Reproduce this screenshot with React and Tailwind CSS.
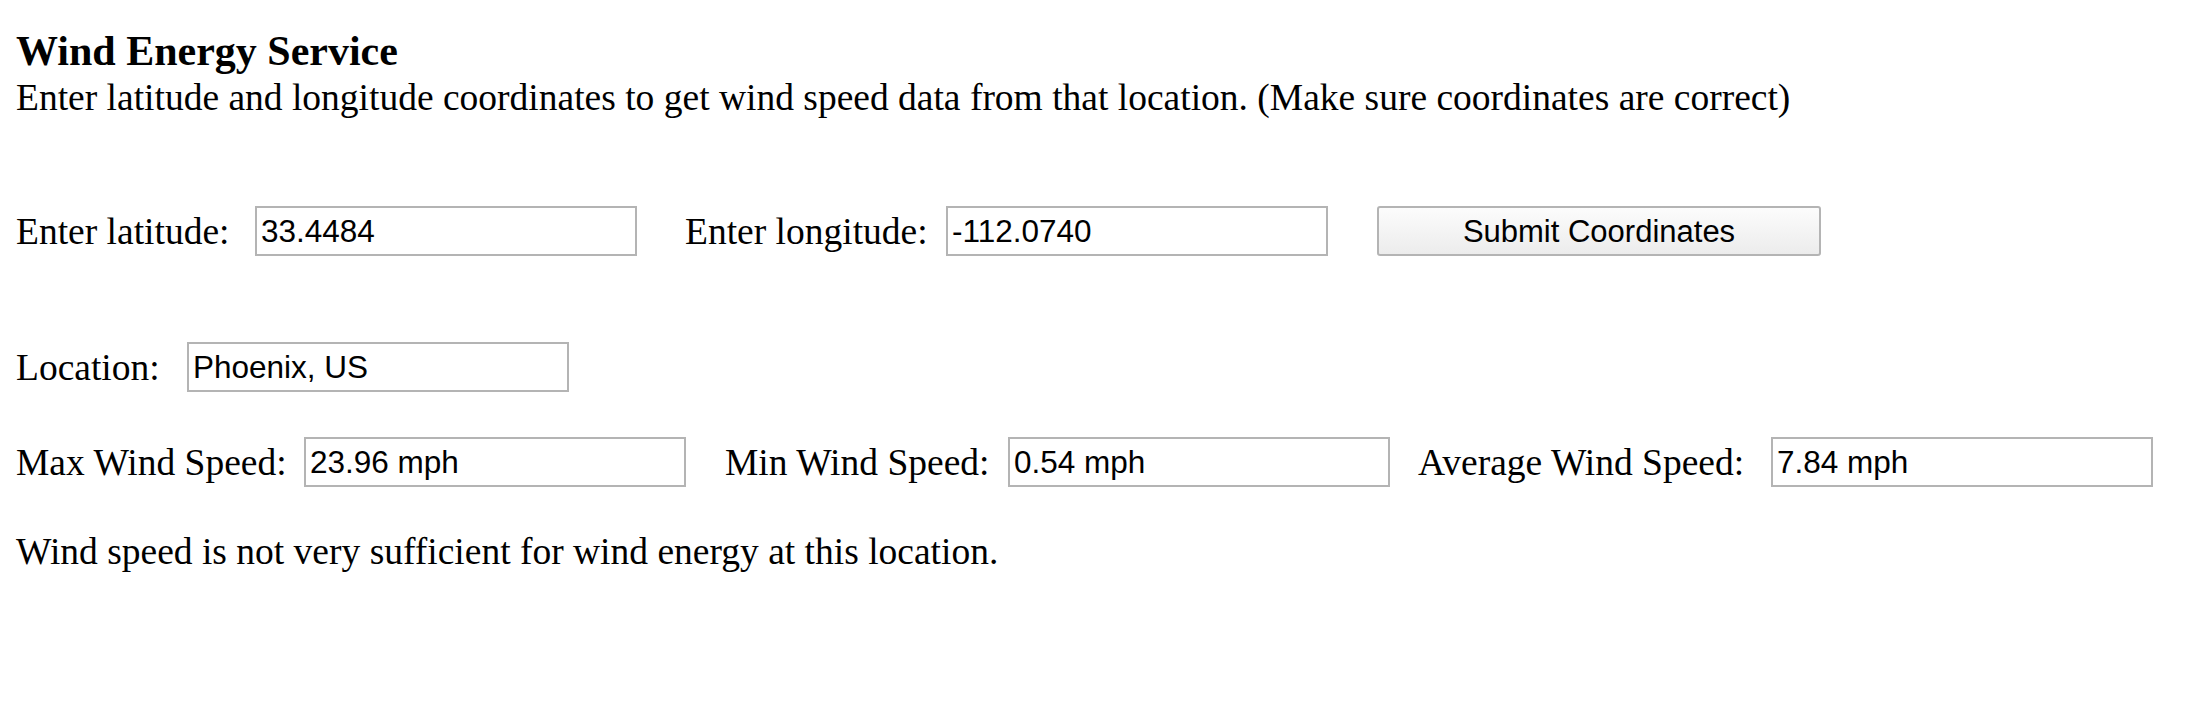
import { useState } from 'react';

const inputCls =
  "h-[50px] w-[382px] border-2 border-[#b4b4b4] bg-white px-[4px] text-[31.5px] text-black outline-none font-['Liberation_Sans',Arial,sans-serif]";

const Field = ({ label, width, value, onChange, gapLeft = '' }) => (
  <div className={`flex items-center ${gapLeft}`}>
    <span className={`inline-block shrink-0 ${width}`}>{label}</span>
    <input type="text" className={inputCls} value={value} onChange={onChange} />
  </div>
);

const App = () => {
  const [lat, setLat] = useState('33.4484');
  const [lon, setLon] = useState('-112.0740');

  // results from the last lookup
  const result = {
    location: 'Phoenix, US',
    max: '23.96 mph',
    min: '0.54 mph',
    avg: '7.84 mph',
  };

  return (
    <div className="min-h-[716px] bg-white pl-[16px] pt-[27px] text-black text-[37.5px] leading-[41px] font-['Liberation_Serif','Times_New_Roman',serif]">
      <h3 className="text-[42px] font-bold leading-[48px]">Wind Energy Service</h3>
      <p className="mt-[2px]">
        Enter latitude and longitude coordinates to get wind speed data from that location. (Make sure coordinates are correct)
      </p>

      <div className="mt-[88px] flex items-center">
        <Field label="Enter latitude:" width="w-[239px]" value={lat} onChange={e => setLat(e.target.value)} />
        <Field label="Enter longitude:" width="w-[261px]" gapLeft="ml-[48px]" value={lon} onChange={e => setLon(e.target.value)} />
        <button className="ml-[49px] h-[50px] w-[444px] rounded-[3px] border-2 border-[#b4b4b4] bg-gradient-to-b from-[#fcfcfc] to-[#ececec] text-[31px] font-['Liberation_Sans',Arial,sans-serif]">
          Submit Coordinates
        </button>
      </div>

      <div className="mt-[86px] flex items-center">
        <Field label="Location:" width="w-[171px]" value={result.location} onChange={() => {}} />
      </div>

      <div className="mt-[45px] flex items-center">
        <Field label="Max Wind Speed:" width="w-[288px]" value={result.max} onChange={() => {}} />
        <Field label="Min Wind Speed:" width="w-[283px]" gapLeft="ml-[39px]" value={result.min} onChange={() => {}} />
        <Field label="Average Wind Speed:" width="w-[353px]" gapLeft="ml-[28px]" value={result.avg} onChange={() => {}} />
      </div>

      <p className="mt-[44px]">Wind speed is not very sufficient for wind energy at this location.</p>
    </div>
  );
};

export default App;
